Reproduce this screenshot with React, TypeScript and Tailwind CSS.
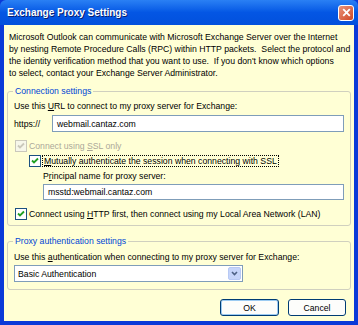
import React from 'react';

const font = "font-['Liberation_Sans',Arial,sans-serif]";

const Check: React.FC<{ disabled?: boolean }> = ({ disabled }) => (
  <span
    className={`flex h-[12px] w-[12px] shrink-0 items-center justify-center border ${
      disabled ? 'border-[#cac8bb] bg-[#f7f7ea]' : 'border-[#1c5180] bg-white'
    }`}
  >
    <svg width="8" height="8" viewBox="0 0 8 8">
      <path
        d="M1 3.5 L3 5.5 L7 1.5"
        fill="none"
        stroke={disabled ? '#cac8bb' : '#21a121'}
        strokeWidth="1.8"
      />
    </svg>
  </span>
);

const Group: React.FC<{ title: string; className?: string; children: React.ReactNode }> = ({
  title,
  className,
  children,
}) => (
  <div className={`relative rounded-[3px] border border-[#d0d0bf] ${className ?? ''}`}>
    <span className="absolute -top-[7px] left-[5px] bg-[#ffffd5] px-[2px] leading-[12px] text-[#0046d5]">
      {title}
    </span>
    {children}
  </div>
);

const App: React.FC = () => {
  return (
    <div className={`flex h-[325px] w-[358px] flex-col bg-[#0a3ad8] ${font} text-[8.7px] leading-[12px] text-black`}>
      <div className="flex h-[25px] shrink-0 items-center justify-between rounded-t-[6px] bg-gradient-to-b from-[#2a80f4] via-[#0456e4] to-[#0250dc] pl-[7px] pr-[4px]">
        <span className="text-[10px] font-bold text-white [text-shadow:1px_1px_0_#0a1e6e]">
          Exchange Proxy Settings
        </span>
        <span className="flex h-[16px] w-[16px] items-center justify-center rounded-[3px] border border-white bg-gradient-to-br from-[#e8937a] to-[#d0451f]">
          <svg width="9" height="9" viewBox="0 0 9 9">
            <path d="M1.2 1.2 L7.8 7.8 M7.8 1.2 L1.2 7.8" stroke="white" strokeWidth="1.8" />
          </svg>
        </span>
      </div>
      <div className="mx-[4px] mb-[4px] flex flex-1 flex-col bg-[#ffffd5] px-[3px] pt-[6px]">
        <p className="whitespace-nowrap pl-[2px]">
          Microsoft Outlook can communicate with Microsoft Exchange Server over the Internet
          <br />
          by nesting Remote Procedure Calls (RPC) within HTTP packets.&nbsp; Select the protocol and
          <br />
          the identity verification method that you want to use.&nbsp; If you don't know which options
          <br />
          to select, contact your Exchange Server Administrator.
        </p>

        <Group title="Connection settings" className="mt-[12px] h-[135px] px-[6px] pt-[8px]">
          <div>
            Use this <span className="underline">U</span>RL to connect to my proxy server for Exchange:
          </div>
          <div className="mt-[3px] flex items-center">
            <span className="w-[38px]">https://</span>
            <div className="flex h-[17px] flex-1 items-center border border-[#7f9db9] bg-white pl-[4px]">
              webmail.cantaz.com
            </div>
          </div>
          <div className="mt-[8px] flex h-[12px] items-center gap-[2px] pl-[1px] text-[#aca899]">
            <Check disabled />
            <span>
              Connect using <span className="underline">S</span>SL only
            </span>
          </div>
          <div className="mt-[3px] flex h-[12px] items-center gap-[1px] pl-[15px]">
            <Check />
            <span className="whitespace-nowrap border border-dotted border-black px-[1px] leading-[10px]">
              <span className="underline">M</span>utually authenticate the session when connecting with SSL
            </span>
          </div>
          <div className="mt-[3px] pl-[29px]">
            P<span className="underline">r</span>incipal name for proxy server:
          </div>
          <div className="mt-[2px] ml-[29px] flex h-[16px] items-center border border-[#7f9db9] bg-white pl-[4px]">
            msstd:webmail.cantaz.com
          </div>
          <div className="mt-[8px] flex h-[12px] items-center gap-[2px] pl-[1px]">
            <Check />
            <span className="whitespace-nowrap">
              Connect using <span className="underline">H</span>TTP first, then connect using my Local Area Network
              (LAN)
            </span>
          </div>
        </Group>

        <Group title="Proxy authentication settings" className="mt-[15px] h-[49px] px-[6px] pt-[9px]">
          <div className="whitespace-nowrap">
            Use this <span className="underline">a</span>uthentication when connecting to my proxy server for Exchange:
          </div>
          <div className="mt-[2px] flex h-[17px] w-[229px] items-center border border-[#7f9db9] bg-white pl-[3px] pr-[1px]">
            <span className="flex-1">Basic Authentication</span>
            <span className="flex h-[13px] w-[13px] items-center justify-center rounded-[2px] border border-[#b8c9f4] bg-[#c6d5fa]">
              <svg width="7" height="5" viewBox="0 0 7 5">
                <path d="M1 1 L3.5 3.5 L6 1" fill="none" stroke="#4d6185" strokeWidth="1.6" />
              </svg>
            </span>
          </div>
        </Group>

        <div className="mt-[9px] flex justify-end gap-[9px] pr-[5px]">
          <button className="h-[17px] w-[59px] rounded-[3px] border border-[#003c74] bg-[#fdfdfb] text-[8.7px] shadow-[inset_0_0_0_1px_#9ccbf2]">
            OK
          </button>
          <button className="h-[17px] w-[58px] rounded-[3px] border border-[#003c74] bg-[#fdfdfb] text-[8.7px]">
            Cancel
          </button>
        </div>
      </div>
    </div>
  );
};

export default App;
